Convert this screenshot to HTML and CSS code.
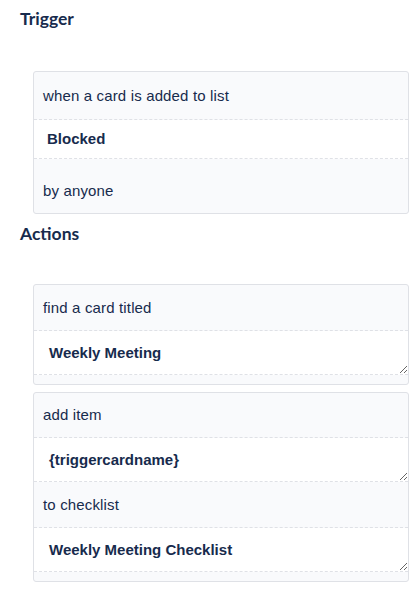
FILE: index.html
```html
<!DOCTYPE html>
<html>
<head>
<meta charset="utf-8">
<link rel="stylesheet" href="styles.css">
</head>
<body>
<section class="section">
  <h3 class="heading">Trigger</h3>
  <div class="card">
    <div class="row row-first">when a card is added to list</div>
    <div class="row row-value">Blocked</div>
    <div class="row row-last">by anyone</div>
  </div>
</section>
<section class="section">
  <h3 class="heading heading-actions">Actions</h3>
  <div class="card card-action">
    <div class="row row-label">find a card titled</div>
    <textarea class="field">Weekly Meeting</textarea>
  </div>
  <div class="card card-action">
    <div class="row row-label row-tight">add item</div>
    <textarea class="field">{triggercardname}</textarea>
    <div class="row row-label">to checklist</div>
    <textarea class="field">Weekly Meeting Checklist</textarea>
  </div>
</section>
</body>
</html>
```
FILE: styles.css
```css
html, body {
  margin: 0;
  padding: 0;
  background: #ffffff;
}
body {
  font-family: "Liberation Sans", Arial, sans-serif;
  font-size: 15px;
  color: #172b4d;
  padding: 8px 6px 0 20px;
  width: 415px;
  box-sizing: border-box;
}
.heading {
  font-family: Lato, "Liberation Sans", sans-serif;
  font-weight: 700;
  font-size: 17.5px;
  line-height: 22px;
  margin: 0 0 41px 0;
  color: #172b4d;
}
.heading-actions {
  margin-top: 9px;
  margin-bottom: 39px;
}
.card {
  margin-left: 13px;
  border: 1px solid #dfe1e6;
  border-radius: 3px;
  background: #f9fafc;
  overflow: hidden;
}
.card-action {
  padding-bottom: 9px;
  margin-bottom: 7px;
}
.row {
  padding: 0 9px;
  line-height: 20px;
  letter-spacing: 0.15px;
}
.row-first {
  padding-top: 14px;
  padding-bottom: 13px;
  border-bottom: 1px dashed #dfe1e6;
}
.row-value {
  background: #ffffff;
  font-weight: 700;
  letter-spacing: 0;
  padding: 9px 13px;
  border-bottom: 1px dashed #dfe1e6;
}
.row-last {
  padding-top: 22px;
  padding-bottom: 12px;
}
.row-label {
  padding-top: 13px;
  padding-bottom: 12px;
  border-bottom: 1px dashed #dfe1e6;
}
.row-tight {
  padding-top: 12px;
}
.field {
  display: block;
  width: 100%;
  box-sizing: border-box;
  height: 44px;
  margin: 0;
  border: none;
  border-bottom: 1px dashed #dfe1e6;
  background: #ffffff;
  font-family: "Liberation Sans", Arial, sans-serif;
  font-size: 15px;
  font-weight: 700;
  color: #172b4d;
  line-height: 20px;
  padding: 12px 15px 0 15px;
  resize: vertical;
  overflow: hidden;
  outline: none;
}
```
